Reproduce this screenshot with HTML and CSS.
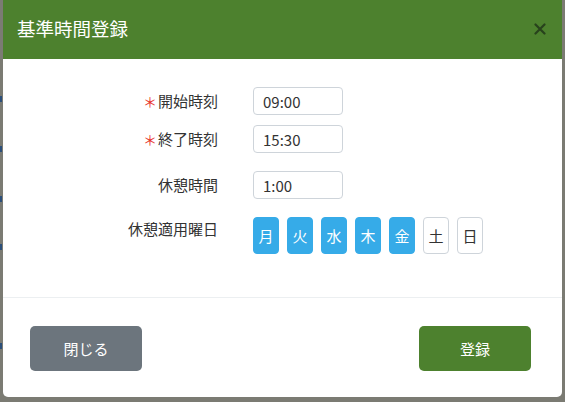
FILE: index.html
```html
<!DOCTYPE html>
<html lang="ja">
<head>
<meta charset="utf-8">
<link rel="stylesheet" href="styles.css">
</head>
<body>
<div class="backdrop">
  <div class="marks">
    <span class="mark m1"></span><span class="mark m2"></span><span class="mark m3"></span><span class="mark m4"></span><span class="mark m5"></span>
  </div>
  <div class="modal">
    <div class="modal-header">
      <h1 class="modal-title">基準時間登録</h1>
      <button class="close" aria-label="close">
        <svg width="12" height="12" viewBox="0 0 12 12"><path d="M1.5 1.5 L10.5 10.5 M10.5 1.5 L1.5 10.5" stroke="currentColor" stroke-width="2.2" stroke-linecap="round"/></svg>
      </button>
    </div>
    <div class="modal-body">
      <div class="form">
        <div class="row r1">
          <label class="label"><span class="req">＊</span>開始時刻</label>
          <input class="input" type="text" value="09:00">
        </div>
        <div class="row r2">
          <label class="label"><span class="req">＊</span>終了時刻</label>
          <input class="input" type="text" value="15:30">
        </div>
        <div class="row r3">
          <label class="label">休憩時間</label>
          <input class="input" type="text" value="1:00">
        </div>
        <div class="row r4">
          <label class="label label-top">休憩適用曜日</label>
          <div class="days">
            <span class="day on">月</span>
            <span class="day on">火</span>
            <span class="day on">水</span>
            <span class="day on">木</span>
            <span class="day on">金</span>
            <span class="day">土</span>
            <span class="day">日</span>
          </div>
        </div>
      </div>
    </div>
    <div class="modal-footer">
      <button class="btn btn-secondary">閉じる</button>
      <button class="btn btn-primary">登録</button>
    </div>
  </div>
</div>
</body>
</html>
```
FILE: styles.css
```css
* { box-sizing: border-box; }
html, body {
  margin: 0;
  padding: 0;
  width: 565px;
  height: 402px;
  overflow: hidden;
}
body {
  font-family: "Noto Sans CJK JP", "Noto Sans", sans-serif;
  background: #7b7b73;
  color: #333;
}
.backdrop {
  position: relative;
  width: 565px;
  height: 402px;
  padding: 0 3px;
}
.marks { position: absolute; left: 0; top: 0; width: 3px; height: 402px; }
.mark { position: absolute; left: 0; width: 2px; height: 6px; background: #2c4f7a; }
.m1 { top: 96px; } .m2 { top: 146px; } .m3 { top: 196px; } .m4 { top: 244px; } .m5 { top: 343px; }
.modal {
  position: relative;
  width: 559px;
  height: 397px;
  background: #fff;
  border-radius: 0 0 5px 5px;
  display: flex;
  flex-direction: column;
  overflow: hidden;
}
.modal-header {
  height: 59px;
  background: #4d812e;
  display: flex;
  align-items: center;
  justify-content: space-between;
  padding: 0 16px 0 14px;
}
.modal-title {
  margin: 0;
  font-size: 18.5px;
  font-weight: 400;
  color: #fff;
  line-height: 1;
  padding-bottom: 3px;
}
.close {
  border: 0;
  background: transparent;
  padding: 0;
  color: #22381a;
  opacity: 0.85;
  display: flex;
  margin-top: -2px;
}
.modal-body {
  height: 239px;
  border-bottom: 1px solid #eceff1;
  padding-top: 28px;
}
.form { display: flex; flex-direction: column; }
.row {
  display: grid;
  grid-template-columns: 215px 1fr;
  column-gap: 35px;
  align-items: center;
}
.r2 { margin-top: 10px; }
.r3 { margin-top: 18px; }
.r4 { margin-top: 18px; align-items: start; }
.label {
  text-align: right;
  font-size: 15px;
  color: #333;
  line-height: 22px;
}
.label-top { padding-top: 1px; }
.req { color: #e8342c; font-size: 14px; margin-right: 1px; }
.input {
  width: 90px;
  height: 28px;
  border: 1px solid #ced4da;
  border-radius: 4px;
  padding: 0 9px;
  font-family: "Noto Sans CJK JP", "Noto Sans", sans-serif;
  font-size: 15px;
  color: #333;
  outline: none;
}
.days { display: flex; gap: 8px; }
.day {
  width: 26px;
  height: 37px;
  border-radius: 4px;
  border: 1px solid #ced4da;
  display: flex;
  align-items: center;
  justify-content: center;
  font-size: 15px;
  color: #333;
  background: #fff;
}
.day.on {
  background: #36abe8;
  border-color: #36abe8;
  color: #fff;
}
.modal-footer {
  flex: 1;
  display: flex;
  justify-content: space-between;
  align-items: flex-start;
  padding: 28px 31px 0 27px;
}
.btn {
  width: 112px;
  height: 45px;
  border: 0;
  border-radius: 5px;
  font-family: "Noto Sans CJK JP", "Noto Sans", sans-serif;
  font-size: 15px;
  color: #fff;
}
.btn-secondary { background: #6c757d; }
.btn-primary { background: #4d812e; }
```
